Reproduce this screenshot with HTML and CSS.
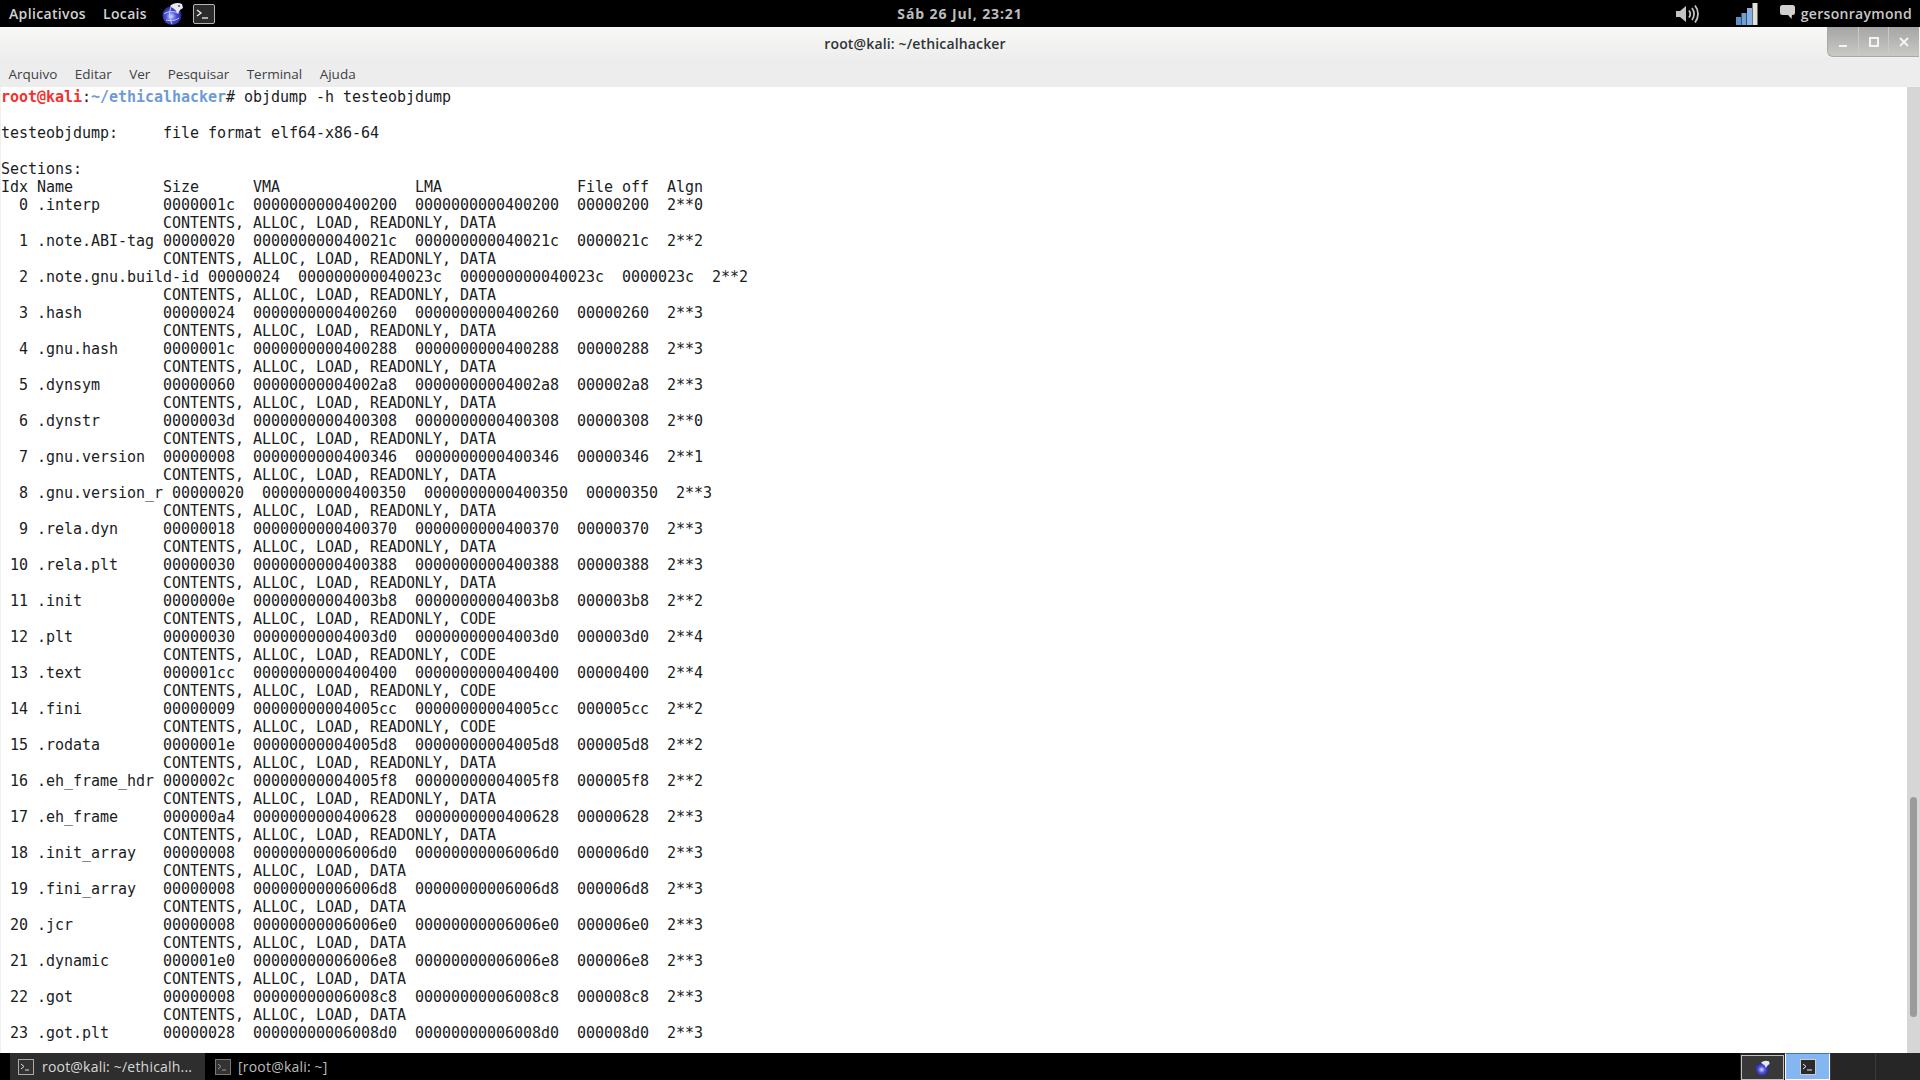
FILE: index.html
```html
<!DOCTYPE html>
<html lang="pt">
<head>
<meta charset="utf-8">
<title>root@kali: ~/ethicalhacker</title>
<link rel="stylesheet" href="styles.css">
</head>
<body>
<header class="panel">
  <nav class="panel-left">
    <span class="panel-label label-apps">Aplicativos</span>
    <span class="panel-label label-places">Locais</span>
    <svg class="icon-globe" viewBox="0 0 24 24" width="24" height="24"><defs><radialGradient id="gl1" cx="45%" cy="55%" r="60%"><stop offset="0" stop-color="#d8dcff"/><stop offset=".45" stop-color="#4a52d8"/><stop offset="1" stop-color="#1c1f8a"/></radialGradient></defs><circle cx="11" cy="13.5" r="9.5" fill="url(#gl1)"/><path d="M3 12c4-3 9-3 15-1M5 18c4 1 9 1 13-2M10 5c-2 5-2 11 1 17" fill="none" stroke="#c8ccff" stroke-width="1"/><path d="M9 4c3-3 8-4 12-2l1 4-3 2c-1 2-2 3-3 4 0-2-1-4-3-5-1-1-3-2-4-3z" fill="#e8e8f0"/><circle cx="18" cy="4" r="1" fill="#555"/></svg>
    <svg class="icon-term" viewBox="0 0 22 20" width="22" height="20"><rect x=".5" y=".5" width="21" height="19" rx="1.5" fill="#2b2b2b" stroke="#b5b5b5"/><path d="M4 6l4 3-4 3" fill="none" stroke="#eee" stroke-width="1.3"/><path d="M9 14h6" stroke="#eee" stroke-width="1.3"/></svg>
  </nav>
  <time class="panel-clock">Sáb 26 Jul, 23:21</time>
  <div class="panel-right">
    <svg class="icon-volume" viewBox="0 0 24 22" width="24" height="22"><path d="M1 8h4l6-5v16l-6-5H1z" fill="#c4c4c4"/><path d="M14 7.5c1.500 2 1.500 5 0 7M17 5c2.700 3.500 2.700 8.500 0 12M20 2.500c4 5 4 12 0 17" fill="none" stroke="#c4c4c4" stroke-width="1.800"/></svg>
    <svg class="icon-signal" viewBox="0 0 22 22" width="22" height="22"><rect x="0" y="14" width="5" height="8" fill="#5d8fc8"/><rect x="5.500" y="10" width="5" height="12" fill="#6f9fd6"/><rect x="11" y="5" width="5" height="17" fill="#84b0e2"/><rect x="16.500" y="0" width="5" height="22" fill="#e2e2dc"/></svg>
    <div class="panel-user">
      <svg class="icon-chat" viewBox="0 0 15 14" width="15" height="14"><path d="M2.500 0h10A2.500 2.500 0 0 1 15 2.500v5a2.500 2.500 0 0 1-2.500 2.500H12l-.5 4-3.500-4H2.500A2.500 2.500 0 0 1 0 7.500v-5A2.500 2.500 0 0 1 2.500 0z" fill="#d0d0d0"/></svg>
      <span class="panel-label label-user">gersonraymond</span>
    </div>
  </div>
</header>

<main class="window">
  <div class="titlebar">
    <h1 class="title">root@kali: ~/ethicalhacker</h1>
    <div class="controls">
      <span class="control"><svg viewBox="0 0 12 12" width="12" height="12"><path d="M2 10h8" stroke="#f4f4f4" stroke-width="2"/></svg></span>
      <span class="control"><svg viewBox="0 0 12 12" width="12" height="12"><rect x="2" y="2" width="8" height="8" fill="none" stroke="#f4f4f4" stroke-width="2"/></svg></span>
      <span class="control"><svg viewBox="0 0 12 12" width="12" height="12"><path d="M2 2l8 8M10 2l-8 8" stroke="#f4f4f4" stroke-width="2"/></svg></span>
    </div>
  </div>
  <nav class="menubar">
    <span>Arquivo</span><span>Editar</span><span>Ver</span><span>Pesquisar</span><span>Terminal</span><span>Ajuda</span>
  </nav>
  <div class="terminal-wrap">
<pre class="terminal"><b class="user">root@kali</b>:<b class="path">~/ethicalhacker</b># objdump -h testeobjdump

testeobjdump:     file format elf64-x86-64

Sections:
Idx Name          Size      VMA               LMA               File off  Algn
  0 .interp       0000001c  0000000000400200  0000000000400200  00000200  2**0
                  CONTENTS, ALLOC, LOAD, READONLY, DATA
  1 .note.ABI-tag 00000020  000000000040021c  000000000040021c  0000021c  2**2
                  CONTENTS, ALLOC, LOAD, READONLY, DATA
  2 .note.gnu.build-id 00000024  000000000040023c  000000000040023c  0000023c  2**2
                  CONTENTS, ALLOC, LOAD, READONLY, DATA
  3 .hash         00000024  0000000000400260  0000000000400260  00000260  2**3
                  CONTENTS, ALLOC, LOAD, READONLY, DATA
  4 .gnu.hash     0000001c  0000000000400288  0000000000400288  00000288  2**3
                  CONTENTS, ALLOC, LOAD, READONLY, DATA
  5 .dynsym       00000060  00000000004002a8  00000000004002a8  000002a8  2**3
                  CONTENTS, ALLOC, LOAD, READONLY, DATA
  6 .dynstr       0000003d  0000000000400308  0000000000400308  00000308  2**0
                  CONTENTS, ALLOC, LOAD, READONLY, DATA
  7 .gnu.version  00000008  0000000000400346  0000000000400346  00000346  2**1
                  CONTENTS, ALLOC, LOAD, READONLY, DATA
  8 .gnu.version_r 00000020  0000000000400350  0000000000400350  00000350  2**3
                  CONTENTS, ALLOC, LOAD, READONLY, DATA
  9 .rela.dyn     00000018  0000000000400370  0000000000400370  00000370  2**3
                  CONTENTS, ALLOC, LOAD, READONLY, DATA
 10 .rela.plt     00000030  0000000000400388  0000000000400388  00000388  2**3
                  CONTENTS, ALLOC, LOAD, READONLY, DATA
 11 .init         0000000e  00000000004003b8  00000000004003b8  000003b8  2**2
                  CONTENTS, ALLOC, LOAD, READONLY, CODE
 12 .plt          00000030  00000000004003d0  00000000004003d0  000003d0  2**4
                  CONTENTS, ALLOC, LOAD, READONLY, CODE
 13 .text         000001cc  0000000000400400  0000000000400400  00000400  2**4
                  CONTENTS, ALLOC, LOAD, READONLY, CODE
 14 .fini         00000009  00000000004005cc  00000000004005cc  000005cc  2**2
                  CONTENTS, ALLOC, LOAD, READONLY, CODE
 15 .rodata       0000001e  00000000004005d8  00000000004005d8  000005d8  2**2
                  CONTENTS, ALLOC, LOAD, READONLY, DATA
 16 .eh_frame_hdr 0000002c  00000000004005f8  00000000004005f8  000005f8  2**2
                  CONTENTS, ALLOC, LOAD, READONLY, DATA
 17 .eh_frame     000000a4  0000000000400628  0000000000400628  00000628  2**3
                  CONTENTS, ALLOC, LOAD, READONLY, DATA
 18 .init_array   00000008  00000000006006d0  00000000006006d0  000006d0  2**3
                  CONTENTS, ALLOC, LOAD, DATA
 19 .fini_array   00000008  00000000006006d8  00000000006006d8  000006d8  2**3
                  CONTENTS, ALLOC, LOAD, DATA
 20 .jcr          00000008  00000000006006e0  00000000006006e0  000006e0  2**3
                  CONTENTS, ALLOC, LOAD, DATA
 21 .dynamic      000001e0  00000000006006e8  00000000006006e8  000006e8  2**3
                  CONTENTS, ALLOC, LOAD, DATA
 22 .got          00000008  00000000006008c8  00000000006008c8  000008c8  2**3
                  CONTENTS, ALLOC, LOAD, DATA
 23 .got.plt      00000028  00000000006008d0  00000000006008d0  000008d0  2**3</pre>
    <div class="scrollbar"><div class="scroll-thumb"></div></div>
  </div>
</main>

<footer class="taskbar">
  <div class="task task-active">
    <svg class="task-icon" viewBox="0 0 16 16" width="16" height="16"><rect x=".5" y=".5" width="15" height="15" fill="#333" stroke="#aaa"/><path d="M3 5l3 2.500-3 2.500M7 11h4" fill="none" stroke="#ddd"/></svg>
    <span>root@kali: ~/ethicalh...</span>
  </div>
  <div class="task task-idle">
    <svg class="task-icon" viewBox="0 0 16 16" width="16" height="16"><rect x=".5" y=".5" width="15" height="15" fill="#333" stroke="#777"/><path d="M3 5l3 2.500-3 2.500M7 11h4" fill="none" stroke="#999"/></svg>
    <span>[root@kali: ~]</span>
  </div>
  <div class="pager">
    <div class="pager-cell pager-first">
      <svg viewBox="0 0 24 24" width="16" height="16"><defs><radialGradient id="gl2" cx="45%" cy="55%" r="60%"><stop offset="0" stop-color="#d8dcff"/><stop offset=".45" stop-color="#4a52d8"/><stop offset="1" stop-color="#1c1f8a"/></radialGradient></defs><circle cx="11" cy="13.500" r="9.500" fill="url(#gl2)"/><path d="M9 4c3-3 8-4 12-2l1 4-3 2c-1 2-2 3-3 4 0-2-1-4-3-5-1-1-3-2-4-3z" fill="#e8e8f0"/></svg>
    </div>
    <div class="pager-cell pager-current">
      <svg viewBox="0 0 16 16" width="16" height="16"><rect x=".5" y=".5" width="15" height="15" fill="#2b2b2b" stroke="#ccc"/><path d="M3 5l3 2.500-3 2.500M7 11h5" fill="none" stroke="#eee"/></svg>
    </div>
    <div class="pager-cell"></div>
    <div class="pager-cell"></div>
  </div>
</footer>
</body>
</html>
```

FILE: styles.css
```css
* { box-sizing: border-box; }
html, body { margin: 0; height: 100%; overflow: hidden; }
body {
  display: flex;
  flex-direction: column;
  width: 1920px;
  height: 1080px;
  background: #000;
  font-family: "Open Sans", "Noto Sans", sans-serif;
}

/* top panel */
.panel {
  height: 27px;
  flex: none;
  background: #000;
  display: grid;
  grid-template-columns: 1fr auto 1fr;
  align-items: center;
  color: #d2d2d2;
}
.panel-left { display: flex; align-items: center; padding-left: 9px; }
.panel-label { font-size: 14px; font-weight: 600; letter-spacing: .35px; white-space: nowrap; }
.label-places { margin-left: 17px; }
.icon-globe { margin-left: 14px; display: block; }
.icon-term { margin-left: 8px; display: block; }
.panel-clock { font-size: 14px; font-weight: 700; letter-spacing: .9px; color: #bdbdbd; }
.panel-right { display: flex; align-items: center; justify-content: flex-end; padding-right: 8px; }
.icon-volume { display: block; margin-right: 37px; }
.icon-signal { display: block; margin-right: 22px; }
.panel-user { display: flex; align-items: center; gap: 6px; }
.icon-chat { display: block; margin-top: -3px; }
.label-user { letter-spacing: .3px; color: #c8c8c8; }

/* window */
.window {
  flex: 1;
  min-height: 0;
  display: flex;
  flex-direction: column;
  background: #ededed;
}
.titlebar {
  height: 33px;
  flex: none;
  position: relative;
  display: flex;
  align-items: center;
  justify-content: flex-end;
  background: linear-gradient(#f8f8f6, #ededed);
}
.title {
  flex: 1;
  margin: 0;
  padding: 0 0 1px 3px;
  text-align: center;
  font-size: 14px;
  font-weight: 600;
  color: #2e3436;
  letter-spacing: .15px;
}
.controls {
  flex: none;
  align-self: flex-start;
  display: flex;
  height: 30px;
  width: 92px;
  margin-right: 1px;
  border-radius: 0 0 0 6px;
  border: 1px solid #a9a9a9;
  border-width: 0 0 1px 1px;
  background: linear-gradient(#a5a5a3, #c9c9c6);
  overflow: hidden;
}
.control {
  flex: 1;
  display: flex;
  align-items: center;
  justify-content: center;
  border-left: 1px solid #c9c9c6;
}
.control:first-child { border-left: 0; }
.menubar {
  height: 27px;
  flex: none;
  display: flex;
  align-items: center;
  gap: 17.4px;
  padding: 0 0 0 8.5px;
  font-size: 13.5px;
  color: #3d4245;
}
.terminal-wrap {
  flex: 1;
  min-height: 0;
  display: flex;
  background: #fff;
}
.terminal {
  flex: 1;
  margin: 0;
  padding: 1px 0 0 1px;
  box-shadow: inset 1px 0 0 #efefef;
  font-family: "DejaVu Sans Mono", monospace;
  font-size: 15px;
  letter-spacing: -.03px;
  line-height: 18px;
  color: #1a1c1d;
  overflow: hidden;
}
.user { color: #f5302f; font-weight: 700; }
.path { color: #6d9bd6; font-weight: 700; }
.scrollbar {
  flex: none;
  width: 13px;
  padding: 710px 3px 36px;
  background: #d6d6d6;
}
.scroll-thumb {
  height: 100%;
  border-radius: 4px;
  background: #9b9b9b;
}

/* taskbar */
.taskbar {
  height: 27px;
  flex: none;
  display: flex;
  align-items: stretch;
  background: #000;
  padding-left: 10px;
  font-size: 14px;
  letter-spacing: .2px;
}
.task {
  display: flex;
  align-items: center;
  gap: 8px;
  padding-left: 8px;
}
.task-active { width: 195px; background: #2e2e2e; color: #d8d8d8; }
.task-idle { color: #bcbcbc; margin-left: 2px; gap: 7px; }
.task-icon { display: block; }
.pager {
  margin-left: auto;
  display: flex;
  width: 180px;
  background: #262626;
}
.pager-cell {
  flex: 1;
  display: flex;
  align-items: center;
  justify-content: center;
  border-left: 1px solid #3a3a3a;
}
.pager-first { border: 1px solid #c0c0c0; background: #383838; margin: 2px 1px 0; flex: none; width: 43px; }
.pager-current { background: #84b7f2; border: 1px solid #fff; border-top: 1px solid #3f78b8; flex: none; width: 45px; }
```
